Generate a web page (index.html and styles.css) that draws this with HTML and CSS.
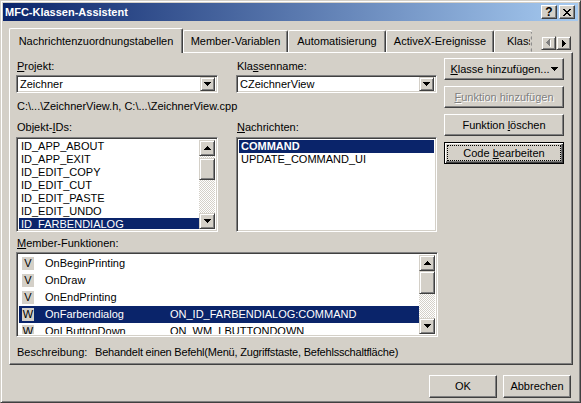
FILE: index.html
```html
<!DOCTYPE html>
<html>
<head>
<meta charset="utf-8">
<title>MFC-Klassen-Assistent</title>
<link rel="stylesheet" href="styles.css">
</head>
<body>
<div class="window">
  <div class="titlebar">
    <span class="title">MFC-Klassen-Assistent</span>
    <span class="tbtn help">?</span>
    <span class="tbtn close"><svg width="8" height="7" viewBox="0 0 8 7"><path d="M0 0h2v1h-2zM6 0h2v1h-2zM1 1h2v1h-2zM5 1h2v1h-2zM2 2h4v1h-4zM3 3h2v1h-2zM2 4h4v1h-4zM1 5h2v1h-2zM5 5h2v1h-2zM0 6h2v1h-2zM6 6h2v1h-2z" fill="#000"/></svg></span>
  </div>
  <div class="main">
    <div class="tabs">
      <div class="tab active w1">Nachrichtenzuordnungstabellen</div>
      <div class="tab w2">Member-Variablen</div>
      <div class="tab w3">Automatisierung</div>
      <div class="tab w4">ActiveX-Ereignisse</div>
      <div class="tab w5"><span class="cliptext">Klass</span><svg class="zig" width="4" height="21" viewBox="0 0 4 21"><path d="M1 0L3 3L1 6L3 9L1 12L3 15L1 18L3 21" stroke="#808080" fill="none"/></svg></div>
      <div class="spin">
        <span class="sbtn"><svg width="5" height="8" viewBox="0 0 5 8"><path d="M4 1h1v7h-1zM3 2h1v5h-1zM2 3h1v3h-1zM1 4h1v1h-1z" fill="#fff"/><path d="M3 0h1v7h-1zM2 1h1v5h-1zM1 2h1v3h-1zM0 3h1v1h-1z" fill="#808080"/></svg></span>
        <span class="sbtn"><svg width="4" height="7" viewBox="0 0 4 7"><path d="M0 0h1v7h-1zM1 1h1v5h-1zM2 2h1v3h-1zM3 3h1v1h-1z" fill="#000"/></svg></span>
      </div>
    </div>
    <div class="panel">
      <div class="top">
        <div class="form">
          <div class="row r-lab1">
            <div class="c1 lab"><u>P</u>rojekt:</div>
            <div class="c2 lab">Kla<u>s</u>senname:</div>
          </div>
          <div class="row r-combo">
            <div class="c1 combo"><span class="ctext">Zeichner</span><span class="dropbtn"><svg width="7" height="4" viewBox="0 0 7 4"><path d="M0 0h7v1h-7zM1 1h5v1h-5zM2 2h3v1h-3zM3 3h1v1h-1z" fill="#000"/></svg></span></div>
            <div class="c2 combo"><span class="ctext">CZeichnerView</span><span class="dropbtn"><svg width="7" height="4" viewBox="0 0 7 4"><path d="M0 0h7v1h-7zM1 1h5v1h-5zM2 2h3v1h-3zM3 3h1v1h-1z" fill="#000"/></svg></span></div>
          </div>
          <div class="path">C:\...\ZeichnerView.h, C:\...\ZeichnerView.cpp</div>
          <div class="row r-lab2">
            <div class="c1 lab">Objekt-<u>I</u>Ds:</div>
            <div class="c2 lab"><u>N</u>achrichten:</div>
          </div>
          <div class="row r-list">
            <div class="c1 list">
              <div class="items">
                <div class="item">ID_APP_ABOUT</div>
                <div class="item">ID_APP_EXIT</div>
                <div class="item">ID_EDIT_COPY</div>
                <div class="item">ID_EDIT_CUT</div>
                <div class="item">ID_EDIT_PASTE</div>
                <div class="item">ID_EDIT_UNDO</div>
                <div class="item sel">ID_FARBENDIALOG</div>
              </div>
              <div class="vsb">
                <span class="sb-btn"><svg width="7" height="4" viewBox="0 0 7 4"><path d="M3 0h1v1h-1zM2 1h3v1h-3zM1 2h5v1h-5zM0 3h7v1h-7z" fill="#000"/></svg></span>
                <span class="track t1"></span>
                <span class="thumb th1"></span>
                <span class="track grow"></span>
                <span class="sb-btn"><svg width="7" height="4" viewBox="0 0 7 4"><path d="M0 0h7v1h-7zM1 1h5v1h-5zM2 2h3v1h-3zM3 3h1v1h-1z" fill="#000"/></svg></span>
              </div>
            </div>
            <div class="c2 list">
              <div class="items">
                <div class="item sel bold">COMMAND</div>
                <div class="item">UPDATE_COMMAND_UI</div>
              </div>
            </div>
          </div>
        </div>
        <div class="btncol">
          <button class="btn split"><span class="btxt"><u>K</u>lasse hinzufügen...</span><svg class="darr" width="7" height="4" viewBox="0 0 7 4"><path d="M0 0h7v1h-7zM1 1h5v1h-5zM2 2h3v1h-3zM3 3h1v1h-1z" fill="#000"/></svg></button>
          <button class="btn dis"><span><u>F</u>unktion hinzufügen</span></button>
          <button class="btn"><span>Funktion <u>l</u>öschen</span></button>
          <button class="btn def"><span class="focus"><span>Code <u>b</u>earbeiten</span></span></button>
        </div>
      </div>
      <div class="lab mlab"><u>M</u>ember-Funktionen:</div>
      <div class="list mlist">
        <div class="items">
          <div class="mrow"><span class="ico">V</span><span class="mname">OnBeginPrinting</span></div>
          <div class="mrow"><span class="ico">V</span><span class="mname">OnDraw</span></div>
          <div class="mrow"><span class="ico">V</span><span class="mname">OnEndPrinting</span></div>
          <div class="mrow sel"><span class="ico">W</span><span class="mname">OnFarbendialog</span><span class="mval">ON_ID_FARBENDIALOG:COMMAND</span></div>
          <div class="mrow"><span class="ico">W</span><span class="mname">OnLButtonDown</span><span class="mval">ON_WM_LBUTTONDOWN</span></div>
        </div>
        <div class="vsb">
          <span class="sb-btn"><svg width="7" height="4" viewBox="0 0 7 4"><path d="M3 0h1v1h-1zM2 1h3v1h-3zM1 2h5v1h-5zM0 3h7v1h-7z" fill="#000"/></svg></span>
          <span class="thumb th2"></span>
          <span class="track grow"></span>
          <span class="sb-btn"><svg width="7" height="4" viewBox="0 0 7 4"><path d="M0 0h7v1h-7zM1 1h5v1h-5zM2 2h3v1h-3zM3 3h1v1h-1z" fill="#000"/></svg></span>
        </div>
      </div>
      <div class="desc"><span class="desc-l">Beschreibung:</span><span class="desc-v">Behandelt einen Befehl(Menü, Zugriffstaste, Befehlsschaltfläche)</span></div>
    </div>
    <div class="footer">
      <button class="btn fbtn"><span>OK</span></button>
      <button class="btn fbtn"><span>Abbrechen</span></button>
    </div>
  </div>
</div>
</body>
</html>
```

FILE: styles.css
```css
* { box-sizing: border-box; }
body {
  margin: 0;
  background: #d4d0c8;
  font: 11px/13px "Liberation Sans", Arial, sans-serif;
  color: #000;
}
u { text-underline-offset: 1px; }
svg { display: block; }

.window {
  width: 581px;
  height: 403px;
  border: 1px solid;
  border-color: #d4d0c8 #404040 #404040 #d4d0c8;
  box-shadow: inset 1px 1px #fff, inset -1px -1px #808080;
  padding: 2px;
  display: flex;
  flex-direction: column;
  background: #d4d0c8;
}

.titlebar {
  height: 18px;
  flex: none;
  display: flex;
  align-items: center;
  background: linear-gradient(to right, #0a246a, #a6caf0);
  padding: 0 3px 0 2px;
}
.title {
  flex: 1;
  color: #fff;
  font-weight: bold;
}
.tbtn {
  width: 16px;
  height: 14px;
  background: #d4d0c8;
  border: 1px solid;
  border-color: #fff #404040 #404040 #fff;
  box-shadow: inset -1px -1px #808080;
  display: flex;
  align-items: center;
  justify-content: center;
}
.help { margin-right: 2px; font-weight: bold; font-size: 12px; line-height: 12px; }

.main {
  flex: 1;
  display: flex;
  flex-direction: column;
  padding: 7px 5px 0 6px;
}

.tabs {
  height: 24px;
  display: flex;
  align-items: flex-end;
  position: relative;
  z-index: 1;
}
.tab {
  height: 22px;
  border: 1px solid #fff;
  border-bottom: none;
  border-right-color: #404040;
  border-radius: 2px 2px 0 0;
  box-shadow: inset -1px 0 #808080;
  display: flex;
  align-items: center;
  justify-content: center;
  white-space: nowrap;
  background: #d4d0c8;
}
.tab.active {
  height: 25px;
  margin-bottom: -1px;
  padding-top: 2px;
  padding-bottom: 1px;
}
.w1 { width: 174px; }
.w2 { width: 105px; }
.w3 { width: 98px; }
.w4 { width: 108px; }
.w5 {
  width: 38px;
  border-right: none;
  box-shadow: none;
  justify-content: flex-start;
  padding-left: 12px;
  overflow: hidden;
}
.cliptext { width: 23px; overflow: hidden; flex: none; }
.zig { flex: none; margin-top: 1px; }

.spin {
  display: flex;
  margin-left: 9px;
  margin-bottom: 2px;
}
.sbtn {
  width: 15px;
  height: 14px;
  background: #d4d0c8;
  border: 1px solid;
  border-color: #d4d0c8 #404040 #404040 #d4d0c8;
  box-shadow: inset 1px 1px #fff, inset -1px -1px #808080;
  display: flex;
  align-items: center;
  justify-content: center;
}

.panel {
  height: 313px;
  border: 1px solid;
  border-color: #fff #404040 #404040 #fff;
  box-shadow: inset -1px -1px #808080;
  padding: 5px 0 0 6px;
  display: flex;
  flex-direction: column;
}

.top { display: flex; gap: 7px; }
.form { width: 421px; display: flex; flex-direction: column; }
.row { display: flex; gap: 18px; }
.c1 { width: 202px; flex: none; }
.c2 { width: 201px; flex: none; }
.lab { padding-left: 1px; height: 13px; white-space: nowrap; }
.r-lab1 { margin-top: 2px; }
.r-combo { margin-top: 2px; }
.path { margin-top: 7px; padding-left: 1px; height: 13px; white-space: nowrap; }
.r-lab2 { margin-top: 8px; }
.r-list { margin-top: 3px; }

.combo, .list {
  border: 1px solid;
  border-color: #808080 #fff #fff #808080;
  box-shadow: inset 1px 1px #404040, inset -1px -1px #d4d0c8;
  background: #fff;
}
.combo {
  height: 18px;
  display: flex;
  align-items: center;
  padding: 2px;
}
.ctext { flex: 1; padding-left: 1px; white-space: nowrap; }
.dropbtn, .sb-btn, .thumb {
  background: #d4d0c8;
  border: 1px solid;
  border-color: #d4d0c8 #404040 #404040 #d4d0c8;
  box-shadow: inset 1px 1px #fff, inset -1px -1px #808080;
}
.dropbtn {
  width: 15px;
  height: 14px;
  display: flex;
  align-items: center;
  justify-content: center;
}

.list {
  height: 95px;
  display: flex;
  padding: 2px;
}
.items { flex: 1; overflow: hidden; min-width: 0; }
.item { height: 13px; padding-left: 2px; white-space: nowrap; }
.sel { background: #0a246a; color: #fff; }
.bold { font-weight: bold; }

.vsb {
  width: 16px;
  flex: none;
  display: flex;
  flex-direction: column;
}
.sb-btn {
  height: 16px;
  flex: none;
  display: flex;
  align-items: center;
  justify-content: center;
}
.track {
  background-color: #fff;
  background-image: repeating-conic-gradient(#d4d0c8 0 25%, #fff 0 50%);
  background-size: 2px 2px;
}
.t1 { height: 2px; flex: none; }
.grow { flex: 1; }
.thumb { flex: none; }
.th1 { height: 22px; }
.th2 { height: 23px; }

.btncol {
  width: 120px;
  display: flex;
  flex-direction: column;
  gap: 6px;
}
.btn {
  font: inherit;
  color: #000;
  height: 22px;
  padding: 0;
  margin: 0;
  background: #d4d0c8;
  border: 1px solid;
  border-color: #fff #404040 #404040 #fff;
  box-shadow: inset -1px -1px #808080;
  display: flex;
  align-items: center;
  justify-content: center;
  white-space: nowrap;
}
.split { padding-right: 5px; }
.btxt { flex: 1; text-align: center; padding-left: 4px; }
.dis { color: #808080; text-shadow: 1px 1px #fff; }
.def {
  border: 1px solid #000;
  box-shadow: inset 1px 1px #fff, inset -1px -1px #404040, inset -2px -2px #808080;
}
.focus {
  flex: 1;
  align-self: stretch;
  margin: 2px;
  border: 1px dotted #000;
  display: flex;
  align-items: center;
  justify-content: center;
}

.mlab { margin-top: 5px; }
.mlist {
  margin-top: 2px;
  width: 422px;
  height: 85px;
}
.mrow {
  height: 17px;
  flex: none;
  display: flex;
  align-items: center;
  white-space: nowrap;
}
.ico {
  width: 12px;
  height: 13px;
  margin-left: 3px;
  background: #d4d0c8;
  color: #000;
  text-align: center;
  flex: none;
}
.mname { width: 125px; margin-left: 11px; flex: none; }
.mval { flex: none; }

.desc {
  margin-top: 9px;
  padding-left: 1px;
  display: flex;
  white-space: nowrap;
}
.desc-l { width: 78px; flex: none; }
.desc-v { letter-spacing: -0.2px; }

.footer {
  display: flex;
  justify-content: flex-end;
  gap: 6px;
  margin-top: 10px;
  padding-right: 2px;
}
.fbtn { width: 68px; height: 23px; }
```
